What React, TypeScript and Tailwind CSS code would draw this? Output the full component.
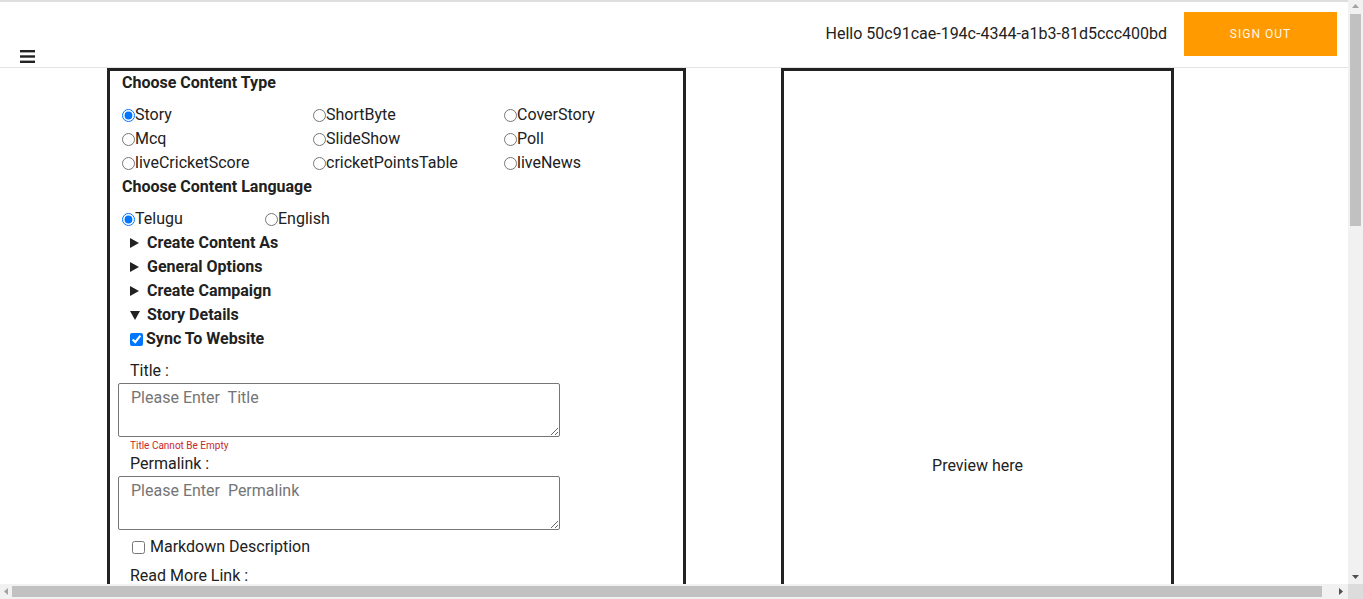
import { useState } from "react";

const contentTypes = [
  ["Story", "ShortByte", "CoverStory"],
  ["Mcq", "SlideShow", "Poll"],
  ["liveCricketScore", "cricketPointsTable", "liveNews"],
];

const RightTri = () => (
  <svg width="9" height="10" viewBox="0 0 9 10" className="mr-[8px]">
    <path d="M0 0 L9 5 L0 10 Z" fill="#222" />
  </svg>
);

const DownTri = () => (
  <svg width="10" height="9" viewBox="0 0 10 9" className="mr-[7px]">
    <path d="M0 0 L10 0 L5 9 Z" fill="#222" />
  </svg>
);

const Section = (props: { label: string; open?: boolean }) => (
  <div className="flex items-center h-6 pl-2 font-bold text-[16px]">
    {props.open ? <DownTri /> : <RightTri />}
    <span>{props.label}</span>
  </div>
);

export default function App() {
  const [type, setType] = useState("Story");
  const [lang, setLang] = useState("Telugu");
  const [sync, setSync] = useState(true);
  const [markdown, setMarkdown] = useState(false);

  return (
    <div
      className="w-[1363px] h-[599px] overflow-hidden flex flex-col bg-white text-[#212121]"
      style={{ fontFamily: "Roboto, 'Liberation Sans', sans-serif" }}
    >
      <div className="flex h-[584px]">
        {/* page */}
        <div className="w-[1348px] h-[584px] overflow-hidden border-t-2 border-[#dedede]">
          <div className="h-[66px] flex justify-between border-b border-[#e4e4e4]">
            <div className="self-end mb-[4px] ml-[20px]">
              <svg width="15" height="13" viewBox="0 0 15 13">
                <rect x="0" y="0" width="15" height="2.4" fill="#222" />
                <rect x="0" y="5.3" width="15" height="2.4" fill="#222" />
                <rect x="0" y="10.6" width="15" height="2.4" fill="#222" />
              </svg>
            </div>
            <div className="flex items-start pt-[10px] pr-[11px]">
              <span className="text-[16px] leading-6 mt-[10px] mr-[17px] text-[#222]">
                Hello 50c91cae-194c-4344-a1b3-81d5ccc400bd
              </span>
              <button className="w-[153px] h-[44px] bg-[#ff9a00] text-[#fff6e6] text-[12px] tracking-[1px] uppercase">
                Sign out
              </button>
            </div>
          </div>

          <div className="flex items-start">
            {/* left form panel */}
            <div className="ml-[107px] w-[579px] h-[900px] border-[3px] border-[#222] px-3 shrink-0">
              <div className="font-bold text-[16px] leading-6">Choose Content Type</div>
              <div className="mt-[8px]">
                {contentTypes.map((row, i) => (
                  <div key={i} className="grid grid-cols-[191px_191px_191px] h-6 items-center">
                    {row.map((c) => (
                      <label key={c} className="flex items-center text-[16px]">
                        <input
                          type="radio"
                          name="ctype"
                          className="m-0 w-[13px] h-[13px]"
                          checked={type === c}
                          onChange={() => setType(c)}
                        />
                        <span>{c}</span>
                      </label>
                    ))}
                  </div>
                ))}
              </div>
              <div className="font-bold text-[16px] leading-6">Choose Content Language</div>
              <div className="mt-[8px] flex h-6 items-center">
                {["Telugu", "English"].map((l) => (
                  <label key={l} className="flex items-center text-[16px] w-[143px]">
                    <input
                      type="radio"
                      name="lang"
                      className="m-0 w-[13px] h-[13px]"
                      checked={lang === l}
                      onChange={() => setLang(l)}
                    />
                    <span>{l}</span>
                  </label>
                ))}
              </div>
              <Section label="Create Content As" />
              <Section label="General Options" />
              <Section label="Create Campaign" />
              <Section label="Story Details" open />
              <label className="flex items-center h-6 pl-[8px] font-bold text-[16px]">
                <input
                  type="checkbox"
                  className="m-0 mr-[3px] w-[13px] h-[13px]"
                  checked={sync}
                  onChange={() => setSync(!sync)}
                />
                <span>Sync To Website</span>
              </label>

              <div className="mt-[8px] pl-2 text-[16px] leading-6">Title :</div>
              <textarea
                className="block -ml-1 w-[442px] h-[54px] border border-[#767676] rounded-[2px] px-3 pt-[2px] text-[16px] placeholder:text-[#757575] outline-none"
                placeholder="Please Enter  Title"
              />
              <div className="pl-2 text-[10px] leading-[13px] text-[#c62828] mt-[2px]">Title Cannot Be Empty</div>
              <div className="pl-2 text-[16px] leading-6">Permalink :</div>
              <textarea
                className="block -ml-1 w-[442px] h-[54px] border border-[#767676] rounded-[2px] px-3 pt-[2px] text-[16px] placeholder:text-[#757575] outline-none"
                placeholder="Please Enter  Permalink"
              />
              <label className="flex items-center h-6 mt-[5px] pl-[10px] text-[16px]">
                <input
                  type="checkbox"
                  className="m-0 mr-[5px] w-[13px] h-[13px]"
                  checked={markdown}
                  onChange={() => setMarkdown(!markdown)}
                />
                <span>Markdown Description</span>
              </label>
              <div className="mt-[5px] pl-2 text-[16px] leading-6">Read More Link :</div>
            </div>

            {/* preview panel */}
            <div className="ml-[95px] w-[393px] h-[796px] border-[3px] border-[#222] flex items-center justify-center shrink-0">
              <span className="text-[16px] text-[#222]">Preview here</span>
            </div>
          </div>
        </div>

        {/* vertical scrollbar */}
        <div className="w-[15px] h-[584px] bg-[#f1f1f1] flex flex-col items-center">
          <svg width="7" height="4" viewBox="0 0 7 4" className="mt-[4px]">
            <path d="M0 4 L3.5 0 L7 4 Z" fill="#a3a3a3" />
          </svg>
          <div className="w-[11px] h-[212px] mt-[6px] bg-[#c1c1c1]" />
          <div className="flex-1" />
          <svg width="7" height="4" viewBox="0 0 7 4" className="mb-[5px]">
            <path d="M0 0 L7 0 L3.5 4 Z" fill="#505050" />
          </svg>
        </div>
      </div>

      {/* horizontal scrollbar */}
      <div className="flex h-[15px]">
        <div className="w-[1348px] bg-[#f1f1f1] flex items-center">
          <svg width="4" height="7" viewBox="0 0 4 7" className="ml-[4px]">
            <path d="M4 0 L0 3.5 L4 7 Z" fill="#a3a3a3" />
          </svg>
          <div className="h-[11px] w-[1310px] ml-[4px] bg-[#c1c1c1]" />
          <div className="flex-1" />
          <svg width="4" height="7" viewBox="0 0 4 7" className="mr-[5px]">
            <path d="M0 0 L4 3.5 L0 7 Z" fill="#505050" />
          </svg>
        </div>
        <div className="w-[15px] bg-[#dcdcdc]" />
      </div>
    </div>
  );
}
